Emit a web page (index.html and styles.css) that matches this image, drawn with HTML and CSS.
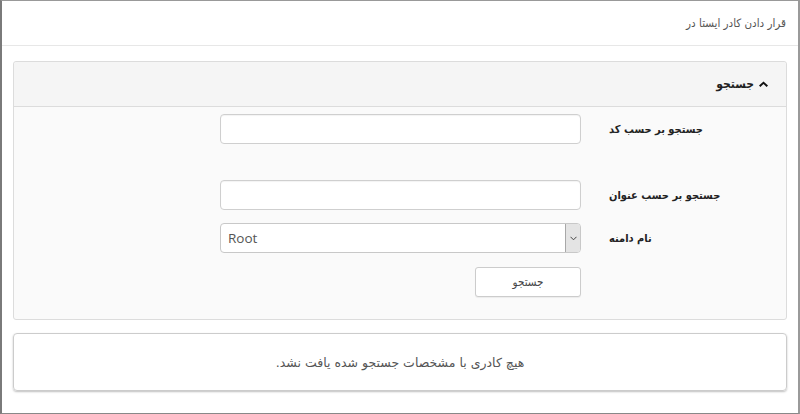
FILE: index.html
```html
<!DOCTYPE html>
<html lang="fa" dir="rtl">
<head>
<meta charset="utf-8">
<title>قرار دادن کادر ایستا در</title>
<link rel="stylesheet" href="styles.css">
</head>
<body>
<div class="frame">
  <div class="page-header">قرار دادن کادر ایستا در</div>
  <div class="content">
    <div class="panel">
      <div class="panel-heading">
        <svg class="caret" width="9" height="6" viewBox="0 0 9 6"><path d="M0 4.6 L4.5 0.4 L9 4.6 L7.6 5.9 L4.5 3 L1.4 5.9 Z" fill="#111"/></svg>
        <span class="panel-title">جستجو</span>
      </div>
      <div class="panel-body">
        <div class="form-row row-code">
          <label class="control-label">جستجو بر حسب کد</label>
          <div class="input"></div>
        </div>
        <div class="form-row row-title">
          <label class="control-label">جستجو بر حسب عنوان</label>
          <div class="input"></div>
        </div>
        <div class="form-row row-domain">
          <label class="control-label">نام دامنه</label>
          <div class="select">
            <span class="select-arrow"><svg width="7" height="5" viewBox="0 0 7 5"><path d="M0.5 0.8 L3.5 3.8 L6.5 0.8" fill="none" stroke="#444" stroke-width="1"/></svg></span>
            <span class="select-value">Root</span>
          </div>
        </div>
        <div class="form-row row-button">
          <div class="label-spacer"></div>
          <div class="button-wrap"><button class="btn">جستجو</button></div>
        </div>
      </div>
    </div>
    <div class="result-box">هیچ کادری با مشخصات جستجو شده یافت نشد.</div>
  </div>
</div>
</body>
</html>
```
FILE: styles.css
```css
html, body {
  margin: 0;
  padding: 0;
  background: #fff;
}
body {
  font-family: "DejaVu Sans", "Noto Sans", sans-serif;
  color: #333;
}
.frame {
  width: 800px;
  height: 414px;
  box-sizing: border-box;
  border-top: 1px solid #999;
  border-left: 2px solid #7a7a7a;
  border-right: 2px solid #9a9a9a;
  border-bottom: 1px solid #888;
  overflow: hidden;
}
.page-header {
  height: 44px;
  border-bottom: 1px solid #e7e7e7;
  display: flex;
  align-items: center;
  padding-right: 12px;
  font-family: "DejaVu Sans Condensed", "DejaVu Sans", sans-serif;
  font-size: 11.5px;
  color: #555;
}
.content {
  padding: 15px 11px 0 11px;
}
.panel {
  border: 1px solid #dcdcdc;
  border-radius: 3px;
  background: #fafafa;
}
.panel-heading {
  height: 44px;
  background: #f5f5f5;
  border-bottom: 1px solid #dcdcdc;
  border-radius: 3px 3px 0 0;
  display: flex;
  align-items: center;
  gap: 5px;
  padding-right: 18px;
}
.caret {
  display: block;
}
.panel-title {
  font-family: "DejaVu Sans Condensed", "DejaVu Sans", sans-serif;
  font-size: 12px;
  font-weight: bold;
  color: #222;
}
.panel-body {
  padding: 7px 0 22px 0;
}
.form-row {
  display: flex;
  align-items: center;
  height: 30px;
}
.row-code { margin-bottom: 36px; }
.row-title { margin-bottom: 13px; }
.row-domain { margin-bottom: 14px; }
.control-label,
.label-spacer {
  width: 163px;
  margin-right: 14px;
  margin-left: 28px;
  text-align: left;
  font-family: "DejaVu Sans Condensed", "DejaVu Sans", sans-serif;
  font-size: 11px;
  font-weight: bold;
  color: #222;
}
.input {
  width: 359px;
  height: 28px;
  border: 1px solid #cfcfcf;
  border-radius: 4px;
  background: #fff;
  box-shadow: inset 0 1px 1px rgba(0,0,0,0.05);
}
.select {
  width: 359px;
  height: 28px;
  border: 1px solid #c8c8c8;
  border-radius: 4px;
  background: #fff;
  display: flex;
  direction: ltr;
  flex-direction: row-reverse;
  align-items: stretch;
  overflow: hidden;
}
.select-value {
  flex: 1;
  display: flex;
  align-items: center;
  padding-left: 7px;
  font-family: "Open Sans", "Liberation Sans", sans-serif;
  font-size: 13.5px;
  color: #555;
}
.select-arrow {
  width: 14px;
  background: #e4e4e4;
  border-left: 1px solid #a8a8a8;
  display: flex;
  align-items: center;
  justify-content: center;
}
.select-arrow svg { display: block; }
.button-wrap {
  width: 361px;
  display: flex;
  justify-content: flex-start;
}
.btn {
  width: 106px;
  height: 30px;
  border: 1px solid #cccccc;
  border-radius: 3px;
  background: #fff;
  font-family: "DejaVu Sans Condensed", "DejaVu Sans", sans-serif;
  font-size: 11.5px;
  color: #444;
  padding: 0;
  box-shadow: 0 1px 1px rgba(0,0,0,0.06);
}
.result-box {
  margin-top: 13px;
  height: 56px;
  border: 1px solid #cccccc;
  border-radius: 4px;
  box-shadow: 0 1px 2px rgba(0,0,0,0.25);
  display: flex;
  align-items: center;
  justify-content: center;
  font-size: 12.5px;
  color: #555;
}
```
